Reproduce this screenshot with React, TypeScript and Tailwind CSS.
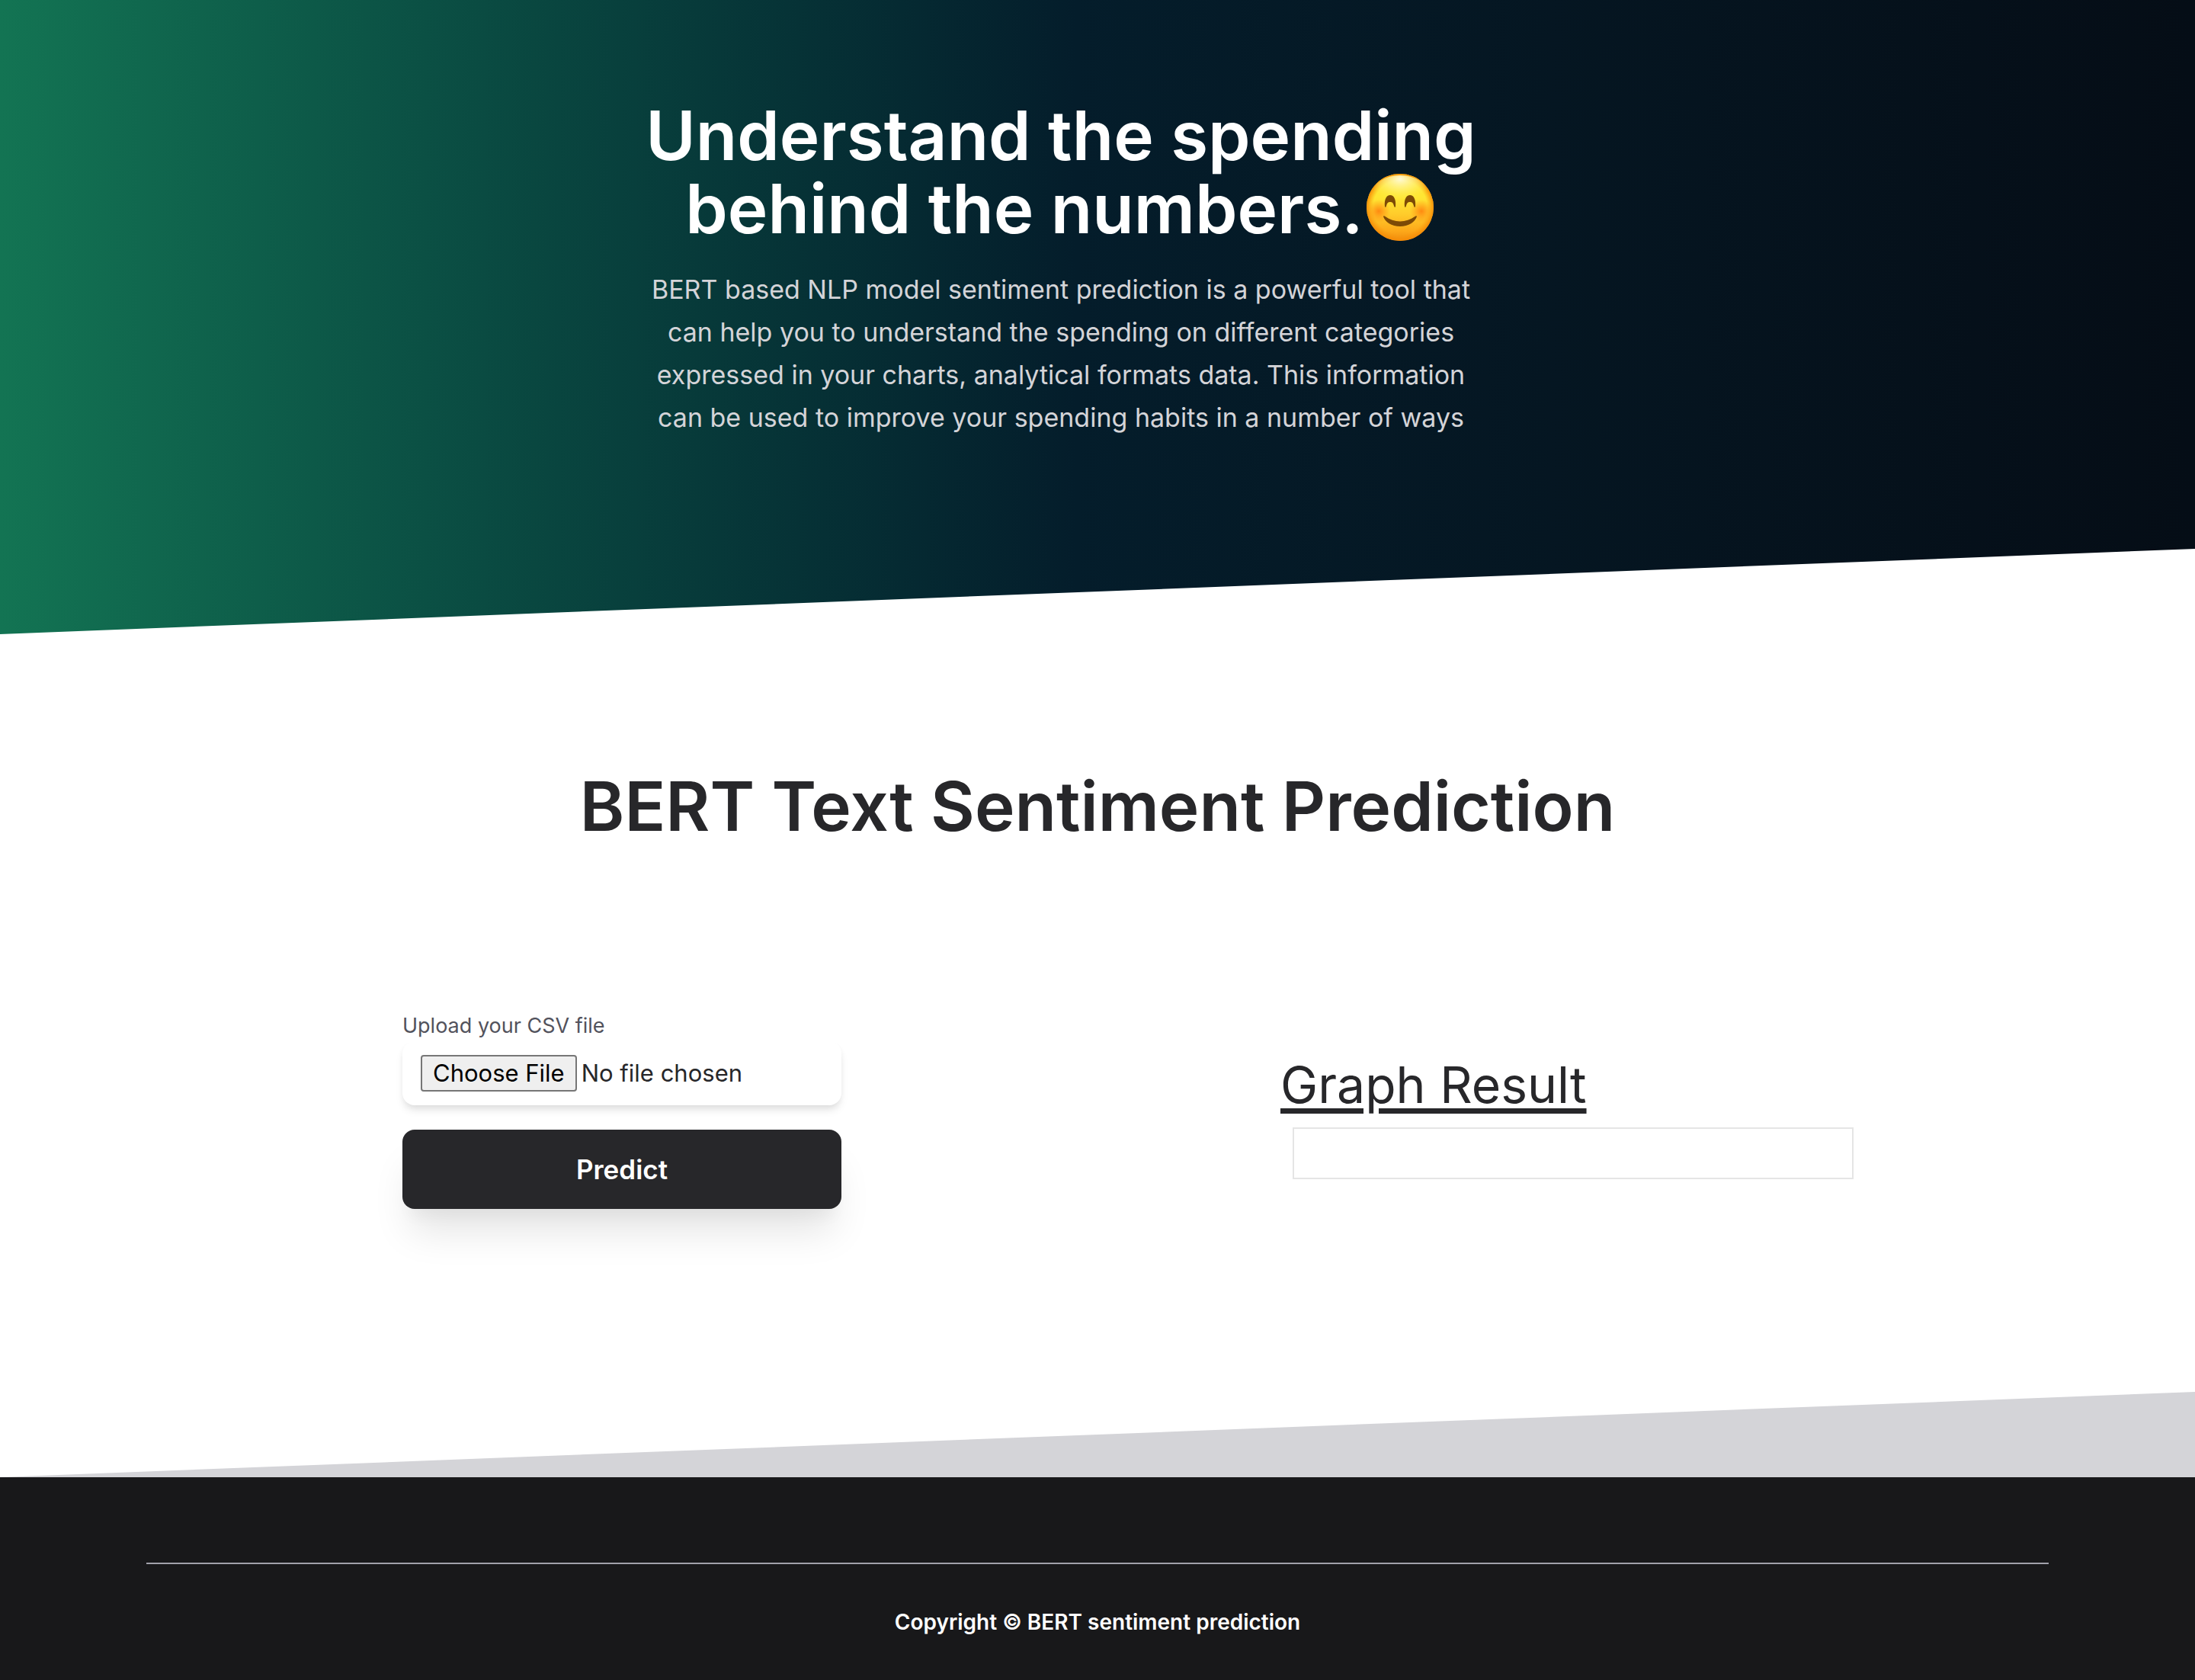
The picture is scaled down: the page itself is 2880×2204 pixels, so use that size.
function SmilingFace() {
  return (
    <svg viewBox="0 0 96 96" className="-my-4 inline-block size-24 align-[2px]" role="img" aria-label="Smiling face">
      <defs>
        <linearGradient id="face" x1="0" y1="0" x2="0" y2="1">
          <stop offset="0" stopColor="#ffe22e" />
          <stop offset="0.35" stopColor="#ffe633" />
          <stop offset="0.6" stopColor="#ffcc2b" />
          <stop offset="0.85" stopColor="#fda91a" />
          <stop offset="1" stopColor="#f08c10" />
        </linearGradient>
        <radialGradient id="rim" cx="0.5" cy="0.5" r="0.5">
          <stop offset="0.8" stopColor="#f99a0c" stopOpacity="0" />
          <stop offset="1" stopColor="#f58a06" stopOpacity="0.95" />
        </radialGradient>
        <radialGradient id="shine" cx="0.5" cy="0.1" r="0.6">
          <stop offset="0" stopColor="#fffbe0" stopOpacity="0.95" />
          <stop offset="0.5" stopColor="#fff58a" stopOpacity="0.6" />
          <stop offset="1" stopColor="#ffec4a" stopOpacity="0" />
        </radialGradient>
        <radialGradient id="blush">
          <stop offset="0" stopColor="#ff7d0c" stopOpacity="0.85" />
          <stop offset="1" stopColor="#ff8f12" stopOpacity="0" />
        </radialGradient>
      </defs>
      <circle cx="48" cy="48" r="44" fill="url(#face)" />
      <circle cx="48" cy="48" r="44" fill="url(#rim)" />
      <ellipse cx="48" cy="30" rx="36" ry="24" fill="url(#shine)" />
      <circle cx="20" cy="53" r="15" fill="url(#blush)" />
      <circle cx="76" cy="53" r="15" fill="url(#blush)" />
      <path d="M28 47C27 38 30 32 35 32S43 38 42 47C41.500 48.500 40.500 48 40 46C39 42 37.500 41 35 41S31 42 30 46C29.500 48 28.500 48.500 28 47Z" fill="#7d4a06" />
      <path d="M54 47C53 38 56 32 61 32S69 38 68 47C67.500 48.500 66.500 48 66 46C65 42 63.500 41 61 41S57 42 56 46C55.500 48 54.500 48.500 54 47Z" fill="#7d4a06" />
      <path d="M26 60C26 59 27.500 59 28.500 60C40 68.500 56 68.500 67.500 60C68.500 59 70 59 70 60C68 67 59 73 48 73S28 67 26 60Z" fill="#7d4a06" />
    </svg>
  );
}

export default function App() {
  return (
    <div className="min-h-screen bg-white font-[Inter,'Liberation_Sans',sans-serif] text-[#27272a]">
      <header className="bg-linear-to-r from-[#137453] via-[#041d2b] via-49% to-[#050d16] pt-[130px] pr-24 pb-64 text-center [clip-path:polygon(0_0,100%_0,100%_calc(100%-112px),0_100%)]">
        <div className="mx-auto max-w-[1136px]">
          <h1 className="text-[89px] leading-24 font-semibold text-white">
            Understand the spending behind the numbers.
            <SmilingFace />
          </h1>
          <p className="mx-auto mt-[30px] max-w-[1100px] text-[34px] leading-14 text-zinc-300">
            BERT based NLP model sentiment prediction is a powerful tool that can help you to understand the spending on
            different categories expressed in your charts, analytical formats data. This information can be used to
            improve your spending habits in a number of ways
          </p>
        </div>
      </header>

      <main className="pt-[178px]">
        <h2 className="text-center text-[89px] leading-24 font-semibold">BERT Text Sentiment Prediction</h2>
        <div className="mt-55 pl-24">
          <div className="mx-auto flex w-full max-w-[1920px] items-start justify-between">
            <form className="flex w-3/10 flex-col" onSubmit={(e) => e.preventDefault()}>
              <label htmlFor="csv" className="text-[27px] leading-10 text-zinc-600">
                Upload your CSV file
              </label>
              <input
                id="csv"
                type="file"
                className="rounded-2xl bg-white px-6 py-4 text-[31px] leading-13 shadow-[0_8px_12px_-2px_rgba(0,0,0,0.1),0_4px_8px_-2px_rgba(0,0,0,0.06)] file:mr-1.5 file:rounded-sm file:border-2 file:border-[#767676] file:bg-[#efefef] file:px-3.5 file:leading-11 file:text-black"
              />
              <button
                type="submit"
                className="mt-8 h-26 rounded-2xl bg-[#27272a] text-[35px] font-semibold text-white shadow-[0_40px_50px_-10px_rgba(0,0,0,0.1),0_20px_20px_-10px_rgba(0,0,0,0.04)]"
              >
                Predict
              </button>
            </form>
            <section className="w-2/5 pt-[61px]">
              <h3 className="text-[66px] leading-18 underline decoration-[7px] underline-offset-7">Graph Result</h3>
              <div className="mx-4 mt-5 h-17 border-2 border-[#e5e5e5]" />
            </section>
          </div>
        </div>
        <div className="mt-60 h-28 bg-[#d4d4d8] [clip-path:polygon(0_100%,100%_0,100%_100%)]" />
      </main>

      <footer className="bg-[#18181a] px-48 pt-28 pb-14">
        <hr className="border-t-2 border-[#a1a1aa]" />
        <p className="mt-14 text-center text-[28px] leading-10 font-semibold text-white">
          Copyright © BERT sentiment prediction
        </p>
      </footer>
    </div>
  );
}
